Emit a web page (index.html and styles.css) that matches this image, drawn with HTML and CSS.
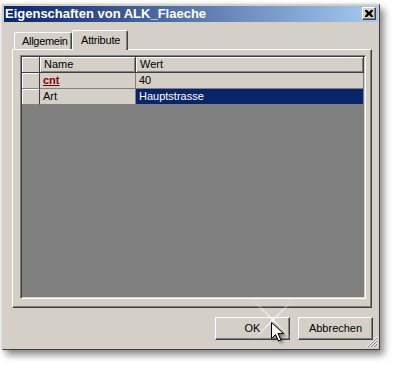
FILE: index.html
```html
<!DOCTYPE html>
<html>
<head>
<meta charset="utf-8">
<link rel="stylesheet" href="styles.css">
</head>
<body>
<div class="window">
  <div class="titlebar">
    <span class="title">Eigenschaften von ALK_Flaeche</span>
    <span class="closebtn">
      <svg width="8" height="7" viewBox="0 0 8 7"><path d="M0 0h2l2 2 2-2h2v1l-2 2.5 2 2.5v1h-2l-2-2-2 2h-2v-1l2-2.5-2-2.5z" fill="#000"/></svg>
    </span>
  </div>
  <div class="tabs">
    <div class="tab">Allgemein</div>
    <div class="tab active">Attribute</div>
  </div>
  <div class="panel">
    <div class="grid">
      <div class="cell head rh"></div>
      <div class="cell head">Name</div>
      <div class="cell head">Wert</div>
      <div class="cell rh"></div>
      <div class="cell key">cnt</div>
      <div class="cell">40</div>
      <div class="cell rh"></div>
      <div class="cell">Art</div>
      <div class="cell sel">Hauptstrasse</div>
    </div>
  </div>
  <div class="buttons">
    <div class="btn">OK</div>
    <div class="btn">Abbrechen</div>
  </div>
  <svg class="grip" width="12" height="12" viewBox="0 0 12 12">
    <path d="M11 1L1 11M11 4L4 11M11 7L7 11" stroke="#fff" stroke-width="1"/>
    <path d="M11 2L2 11M11 5L5 11M11 8L8 11" stroke="#808080" stroke-width="1"/>
  </svg>
  <svg class="sparkle" width="44" height="44" viewBox="0 0 44 44">
    <defs>
      <linearGradient id="g1" x1="0" y1="0" x2="1" y2="1">
        <stop offset="0" stop-color="#fff" stop-opacity="0"/>
        <stop offset="0.5" stop-color="#fff" stop-opacity="1"/>
        <stop offset="1" stop-color="#fff" stop-opacity="0"/>
      </linearGradient>
      <linearGradient id="g2" x1="1" y1="0" x2="0" y2="1">
        <stop offset="0" stop-color="#fff" stop-opacity="0"/>
        <stop offset="0.5" stop-color="#fff" stop-opacity="1"/>
        <stop offset="1" stop-color="#fff" stop-opacity="0"/>
      </linearGradient>
    </defs>
    <line x1="2" y1="2" x2="42" y2="42" stroke="url(#g1)" stroke-width="1.2"/>
    <line x1="42" y1="2" x2="2" y2="42" stroke="url(#g2)" stroke-width="1.2"/>
  </svg>
  <svg class="cursor" width="14" height="22" viewBox="0 0 14 22">
    <path d="M0.5 0.5V16.5L4.5 12.5L7.5 19L10 18L7 11.5H12.5Z" fill="#fff" stroke="#000" stroke-width="1" stroke-linejoin="miter"/>
  </svg>
</div>
</body>
</html>
```
FILE: styles.css
```css
html, body {
  margin: 0;
  padding: 0;
  background: #fff;
}
body {
  width: 396px;
  height: 365px;
  overflow: hidden;
  font-family: "Liberation Sans", Arial, sans-serif;
  font-size: 11px;
  color: #000;
}
.window {
  position: relative;
  box-sizing: border-box;
  margin: 4px 0 0 2px;
  width: 378px;
  height: 346px;
  background: #d4d0c8;
  border: 1px solid;
  border-color: #d4d0c8 #404040 #404040 #d4d0c8;
  padding: 1px;
  box-shadow: 4px 5px 7px rgba(0,0,0,0.45), -1px 0 3px rgba(0,0,0,0.15);
  display: flex;
  flex-direction: column;
}
.titlebar {
  height: 16px;
  background: linear-gradient(to right, #0a246a, #a6caf0);
  display: flex;
  align-items: flex-start;
  justify-content: space-between;
}
.title {
  color: #fff;
  font-weight: bold;
  font-size: 13px;
  line-height: 16px;
  padding-left: 1px;
}
.closebtn {
  box-sizing: border-box;
  width: 14px;
  height: 13px;
  margin: 1px 2px 0 0;
  background: #d4d0c8;
  border: 1px solid;
  border-color: #fff #404040 #404040 #fff;
  box-shadow: inset -1px -1px 0 #808080;
  display: flex;
  align-items: center;
  justify-content: center;
}
.closebtn svg { display: block; margin: 0 1px 1px 0; }
.tabs {
  margin: 8px 0 0 8px;
  padding-left: 2px;
  height: 19px;
  display: flex;
  align-items: flex-end;
  position: relative;
  z-index: 1;
}
.tab {
  box-sizing: border-box;
  height: 17px;
  width: 58px;
  border: 1px solid;
  border-bottom: none;
  border-color: #fff #404040 transparent #fff;
  border-radius: 2px 2px 0 0;
  box-shadow: inset -1px 0 0 #808080;
  padding: 2px 0 0 7px;
  line-height: 13px;
  letter-spacing: -0.3px;
  white-space: nowrap;
}
.tab.active {
  height: 20px;
  width: 56px;
  margin-bottom: -1px;
  background: #d4d0c8;
  padding: 3px 0 0 8px;
  letter-spacing: -0.2px;
}
.panel {
  box-sizing: border-box;
  margin: 0 4px 0 8px;
  width: 360px;
  height: 259px;
  border: 1px solid;
  border-color: #fff #404040 #404040 #fff;
  box-shadow: inset -1px -1px 0 #808080;
  padding: 5px 4px 7px 7px;
}
.grid {
  box-sizing: border-box;
  width: 346px;
  height: 244px;
  background: #808080;
  border: 1px solid;
  border-color: #808080 #fff #fff #808080;
  box-shadow: inset 1px 1px 0 #404040, inset -1px -1px 0 #d4d0c8;
  padding: 1px;
  display: grid;
  grid-template-columns: 18px 96px 1fr;
  grid-template-rows: 16px 16px 16px;
  align-content: start;
}
.cell {
  box-sizing: border-box;
  background: #d4d0c8;
  border-right: 1px solid #808080;
  border-bottom: 1px solid #808080;
  padding-left: 3px;
  line-height: 15px;
  white-space: nowrap;
  overflow: hidden;
}
.cell.head {
  border-right: 1px solid #404040;
  border-bottom: 1px solid #404040;
  box-shadow: inset 1px 1px 0 #fff, inset -1px -1px 0 #808080;
  padding-left: 4px;
}
.cell.rh {
  box-shadow: inset 1px 1px 0 #fff;
  border-right: 1px solid #404040;
}
.cell.key {
  color: #800000;
  font-weight: bold;
  text-decoration: underline;
}
.cell.sel {
  background: #0a246a;
  color: #fff;
  border-right: 1px solid #808080;
}
.buttons {
  margin-top: 9px;
  padding-right: 5px;
  display: flex;
  justify-content: flex-end;
  gap: 8px;
}
.btn {
  box-sizing: border-box;
  width: 75px;
  height: 23px;
  border: 1px solid;
  border-color: #fff #404040 #404040 #fff;
  box-shadow: inset -1px -1px 0 #808080;
  text-align: center;
  line-height: 20px;
}
.grip {
  position: absolute;
  right: 1px;
  bottom: 1px;
}
.sparkle {
  position: absolute;
  left: 248px;
  top: 293px;
}
.cursor {
  position: absolute;
  left: 268px;
  top: 317px;
  filter: drop-shadow(2px 2px 1.5px rgba(0,0,0,0.45));
}
```
